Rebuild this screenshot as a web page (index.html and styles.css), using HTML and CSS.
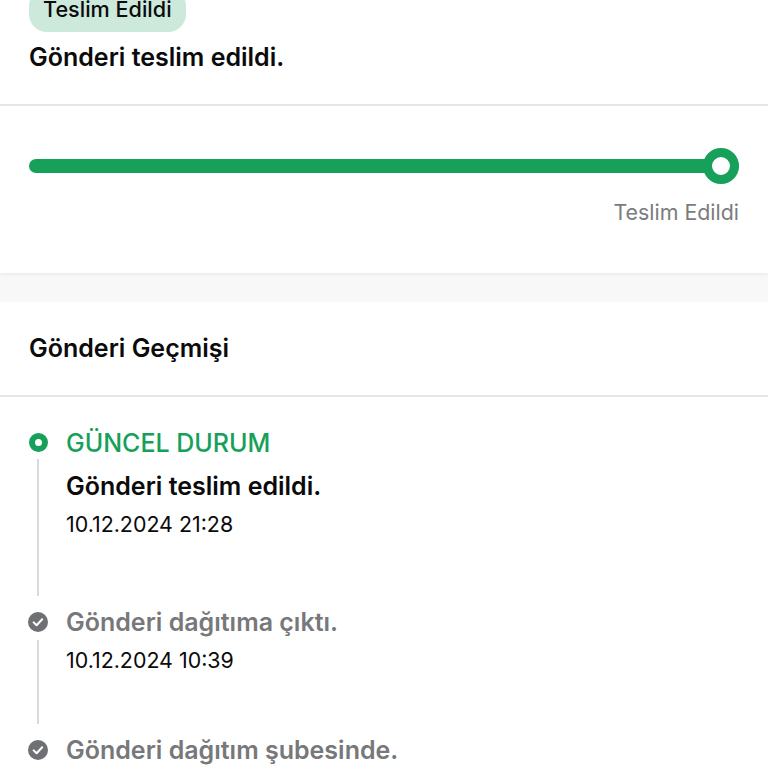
FILE: index.html
```html
<!DOCTYPE html>
<html lang="tr">
<head>
    <meta charset="UTF-8">
    <title>Gönderi Takip</title>
    <link rel="stylesheet" href="styles.css">
</head>
<body>
<div class="page">
    <section class="card">
        <div class="summary">
            <span class="badge">Teslim Edildi</span>
            <p class="summary-text">Gönderi teslim edildi.</p>
        </div>
        <div class="progress">
            <div class="track">
                <div class="bar"></div>
                <div class="knob"></div>
            </div>
            <div class="progress-label">Teslim Edildi</div>
        </div>
    </section>

    <section class="card history">
        <h2 class="history-title">Gönderi Geçmişi</h2>
        <div class="timeline">
            <div class="step step-current">
                <div class="rail">
                    <span class="dot"></span>
                    <span class="line"></span>
                </div>
                <div class="step-body">
                    <div class="step-flag">GÜNCEL DURUM</div>
                    <div class="step-title">Gönderi teslim edildi.</div>
                    <div class="step-date">10.12.2024 21:28</div>
                </div>
            </div>
            <div class="step step-past">
                <div class="rail">
                    <svg class="check" viewBox="0 0 20 20"><circle cx="10" cy="10" r="10" fill="#6f7073"/><path d="M5.6 10.4l3 2.9 5.6-6" fill="none" stroke="#fff" stroke-width="2" stroke-linecap="round" stroke-linejoin="round"/></svg>
                    <span class="line"></span>
                </div>
                <div class="step-body">
                    <div class="step-title">Gönderi dağıtıma çıktı.</div>
                    <div class="step-date">10.12.2024 10:39</div>
                </div>
            </div>
            <div class="step step-past">
                <div class="rail">
                    <svg class="check" viewBox="0 0 20 20"><circle cx="10" cy="10" r="10" fill="#6f7073"/><path d="M5.6 10.4l3 2.9 5.6-6" fill="none" stroke="#fff" stroke-width="2" stroke-linecap="round" stroke-linejoin="round"/></svg>
                </div>
                <div class="step-body">
                    <div class="step-title">Gönderi dağıtım şubesinde.</div>
                </div>
            </div>
        </div>
    </section>
</div>
</body>
</html>
```

FILE: styles.css
```css
html, body {
    margin: 0;
    height: 768px;
    overflow: hidden;
    background: #f8f8f8;
}
body {
    font-family: Inter, "Noto Sans", sans-serif;
    color: #0b0b0b;
}
.page {
    margin-top: -12px;
}
.card {
    background: #fff;
}
.card:first-child {
    box-shadow: 0 1px 4px rgba(0, 0, 0, 0.08);
    margin-bottom: 29px;
}
.summary {
    padding: 0 29px;
    height: 116px;
    border-bottom: 2px solid #e6e6e6;
}
.badge {
    display: inline-block;
    height: 44px;
    line-height: 42px;
    padding: 0 14px;
    border-radius: 18px;
    background: #cce9dc;
    font-size: 21.6px;
    font-weight: 500;
}
.summary-text {
    margin: 9px 0 0;
    font-size: 25px;
    line-height: 33px;
    font-weight: 600;
}
.progress {
    padding: 42px 29px 48px;
}
.track {
    position: relative;
    height: 36px;
    display: flex;
    align-items: center;
}
.bar {
    flex: 1;
    height: 14px;
    border-radius: 7px;
    background: #16a05a;
}
.knob {
    position: absolute;
    right: 0;
    top: 0;
    width: 18px;
    height: 18px;
    border: 9px solid #16a05a;
    border-radius: 50%;
    background: #fff;
}
.progress-label {
    margin-top: 15px;
    text-align: right;
    font-size: 21.4px;
    line-height: 26px;
    color: #7b7b7e;
}
.history-title {
    margin: 0;
    padding: 0 29px;
    height: 93px;
    line-height: 92px;
    font-size: 25px;
    font-weight: 600;
    border-bottom: 2px solid #e6e6e6;
}
.timeline {
    padding: 35px 29px 7px;
}
.step {
    display: flex;
    gap: 19px;
}
.rail {
    width: 18px;
    flex: none;
    display: flex;
    flex-direction: column;
    align-items: center;
}
.dot {
    flex: none;
    width: 7px;
    height: 7px;
    border: 6.5px solid #16a05a;
    border-radius: 50%;
    margin-top: 1px;
}
.check {
    width: 20px;
    height: 20px;
    flex: none;
    margin-top: 1px;
}
.line {
    width: 2px;
    flex: 1;
    background: #d9d9d9;
    margin-top: 7px;
    margin-bottom: 15px;
}
.step-past .line {
    margin-top: 8px;
}
.step-body {
    flex: 1;
}
.step-flag {
    font-size: 25px;
    line-height: 22px;
    font-weight: 500;
    color: #16a05a;
    margin-bottom: 21px;
}
.step-title {
    font-size: 25px;
    line-height: 22px;
    font-weight: 600;
}
.step-past .step-title {
    color: #77787b;
}
.step-date {
    margin-top: 15px;
    font-size: 21.4px;
    line-height: 24px;
}
.step-current .step-body {
    padding-bottom: 75px;
}
.step-past .step-body {
    padding-bottom: 67px;
}
.step:last-child .step-body {
    padding-bottom: 0;
}
```
